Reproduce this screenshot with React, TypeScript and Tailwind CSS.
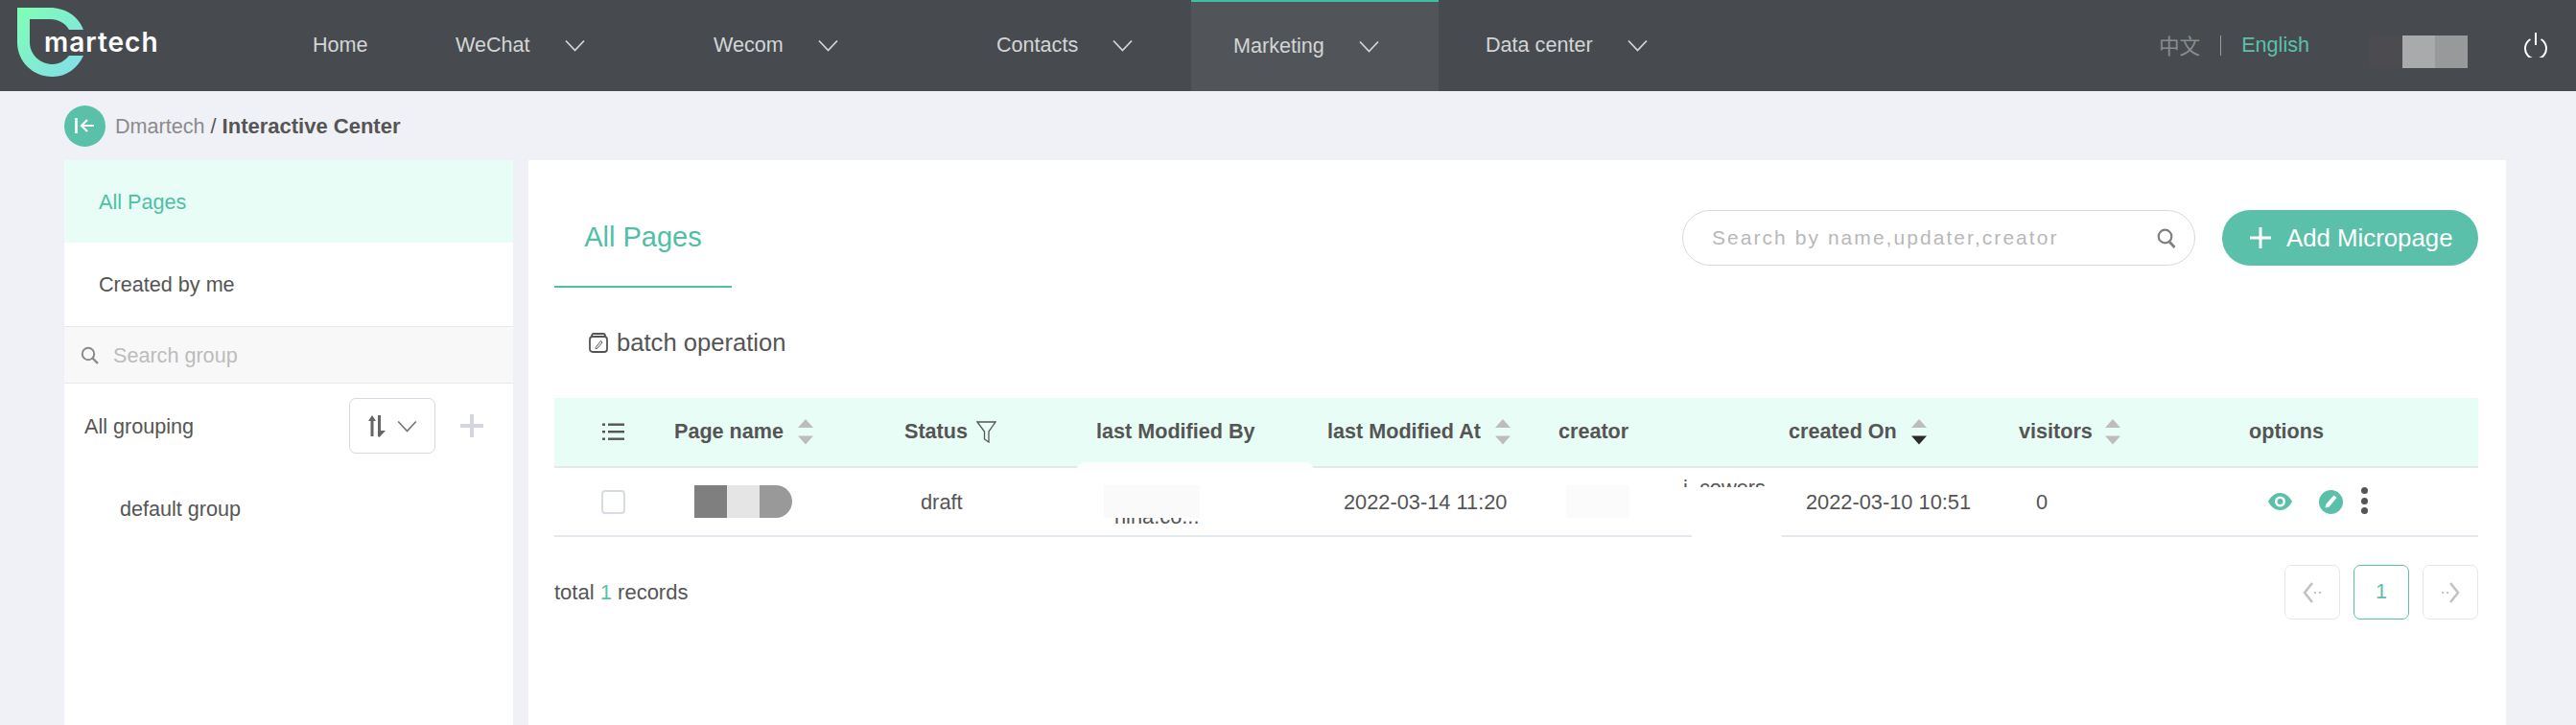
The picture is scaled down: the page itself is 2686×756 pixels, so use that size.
import React from "react";

const sans = "font-['Liberation_Sans',Arial,sans-serif]";

function Chevron({ className = "" }: { className?: string }) {
  return (
    <svg width="21" height="13" viewBox="0 0 21 13" fill="none" className={className}>
      <path d="M1 1.5 L10.5 11.5 L20 1.5" stroke="currentColor" strokeWidth="1.8" />
    </svg>
  );
}

function Sort({ active = false }: { active?: boolean }) {
  return (
    <svg width="16" height="27" viewBox="0 0 16 27" className="shrink-0">
      <path d="M8 0 L16 9 H0 Z" fill="#bdbdbd" />
      <path d="M0 17.5 H16 L8 26.5 Z" fill={active ? "#2b2b2b" : "#bdbdbd"} />
    </svg>
  );
}

function NavItem({ label, width, pad = 44, active = false, arrow = true }: { label: string; width: number; pad?: number; active?: boolean; arrow?: boolean }) {
  return (
    <div
      style={{ width, paddingLeft: pad }}
      className={`h-full flex items-center gap-[36px] text-[21.6px] text-[#d4d5d6] ${active ? "bg-[#51555a] border-t-2 border-[#3fbfa2]" : ""}`}
    >
      <span>{label}</span>
      {arrow && <Chevron />}
    </div>
  );
}

function Head({ label, sort, active, gap = 15 }: { label: string; sort?: boolean; active?: boolean; gap?: number }) {
  return (
    <div style={{ gap }} className="flex items-center font-bold text-[#555]">
      <span>{label}</span>
      {sort && <Sort active={active} />}
    </div>
  );
}

export default function App() {
  return (
    <div className={`${sans} relative w-[2686px] h-[756px] overflow-hidden bg-[#f0f1f6] text-[21.6px] text-[#555] flex flex-col`}>
      {/* header */}
      <header className="h-[95px] shrink-0 bg-[#474b50] flex items-center">
        <div className="relative w-[282px] h-full shrink-0">
          <svg width="70" height="74" viewBox="18 8 70 74" className="absolute left-[18px] top-[8px]">
            <defs>
              <linearGradient id="lg" x1="0" y1="0" x2="1" y2="1">
                <stop offset="0" stopColor="#80ffb4" />
                <stop offset="1" stopColor="#82dcec" />
              </linearGradient>
            </defs>
            <path
              d="M18 8 H52 C68 8 82 17 87 31 H72 C68 24 61 20 52 20 H31 V44 C31 57 42 67 55 67 C62 67 68 63 72 58 H87 C81 71 69 80 55 80 C34 80 18 64 18 44 Z"
              fill="url(#lg)"
            />
          </svg>
          <span className="absolute left-[46px] top-[23px] font-['Inter',sans-serif] font-semibold text-[28px] tracking-[1px] text-white">martech</span>
        </div>
        <NavItem label="Home" width={149} arrow={false} />
        <NavItem label="WeChat" width={269} />
        <NavItem label="Wecom" width={295} />
        <NavItem label="Contacts" width={247} />
        <NavItem label="Marketing" width={258} active />
        <NavItem label="Data center" width={300} pad={49} />
        <div className="ml-[451px] flex items-center text-[21.6px]">
          <span className="font-['Noto_Sans_CJK_SC',sans-serif] text-[#8a8c8e]">中文</span>
          <span className="w-px h-[21px] bg-[#9a9c9e] mx-[21px]" />
          <span className="text-[#5bc0aa]">English</span>
          <div className="ml-[63px] flex h-[34px] mt-[12px]">
            <span className="w-[34px] bg-[#4c4c50]" />
            <span className="w-[34px] bg-[#a9aaac]" />
            <span className="w-[34px] bg-[#98999b]" />
          </div>
          <svg width="26" height="27" viewBox="0 0 26 27" fill="none" className="ml-[58px] mb-[3px]">
            <path d="M7.5 8 A11 11 0 1 0 18.5 8" stroke="#fff" strokeWidth="2" />
            <path d="M13 1 V14" stroke="#fff" strokeWidth="2" />
          </svg>
        </div>
      </header>

      {/* breadcrumb */}
      <div className="h-[72px] shrink-0 pl-[67px] flex items-center gap-[10px]">
        <div className="w-[43px] h-[43px] rounded-full bg-[#5bc0aa] flex items-center justify-center">
          <svg width="21" height="18" viewBox="0 0 21 18" fill="none" stroke="#fff">
            <path d="M1.5 1 V17" strokeWidth="2.6" />
            <path d="M20 9 H7 M13 3 L7 9 L13 15" strokeWidth="2.2" />
          </svg>
        </div>
        <div className="pt-[2px]">
          <span className="text-[#8b8b8b]">Dmartech</span> <span className="text-[#555]">/</span>{" "}
          <span className="font-bold text-[22px] text-[#555]">Interactive Center</span>
        </div>
      </div>

      {/* body */}
      <div className="flex-1 flex pl-[67px] gap-[16px] min-h-0">
        <aside className="w-[468px] bg-white shrink-0">
          <div className="h-[86px] bg-[#e8fdf6] text-[#4fc0a5] pl-[36px] pt-[2px] flex items-center">All Pages</div>
          <div className="h-[87px] pl-[36px] pt-[2px] flex items-center text-[#555]">Created by me</div>
          <div className="h-[60px] bg-[#f8f8f8] border-y-[1.5px] border-[#e6e8ef] pl-[17px] flex items-center gap-[15px]">
            <svg width="19" height="19" viewBox="0 0 19 19" fill="none" stroke="#8a8a8a">
              <circle cx="8" cy="8" r="6.2" strokeWidth="2" />
              <path d="M12.5 12.5 L18 18" strokeWidth="2.4" />
            </svg>
            <span className="text-[#bcbcbc] pt-[2px]">Search group</span>
          </div>
          <div className="h-[88px] pl-[21px] flex items-center text-[#555]">
            <span className="w-[276px] pt-[2px]">All grouping</span>
            <div className="w-[90px] h-[58px] border border-[#d5d9e3] rounded-[7px] flex items-center justify-center gap-[11px]">
              <svg width="20" height="23" viewBox="0 0 20 23" fill="#666">
                <path d="M5 0 L9 6 H6.5 V22 H3.5 V6 H1 Z" />
                <path d="M11 0 H14 V16 H19 L12.5 23 L11 22 Z" />
              </svg>
              <Chevron className="text-[#777] scale-x-[.98]" />
            </div>
            <svg width="24" height="24" viewBox="0 0 24 24" className="ml-[26px]" fill="#d3d6e0">
              <path d="M10 0 H14 V10 H24 V14 H14 V24 H10 V14 H0 V10 H10 Z" />
            </svg>
          </div>
          <div className="pl-[58px] pt-[27px] text-[#555]">default group</div>
        </aside>

        <main className="w-[2062px] bg-white shrink-0 pl-[27px] pr-[29px] relative">
          <div className="h-[133px] flex justify-between">
            <div className="w-[185px] h-full border-b-2 border-[#4fc0a5] pt-[62px] text-center text-[29px] leading-[36px] text-[#4fc0a5]">All Pages</div>
            <div className="flex gap-[28px] pt-[52px]">
              <div className="w-[535px] h-[58px] rounded-full border-[1.5px] border-[#d7d9e3] pl-[30px] pr-[19px] flex items-center justify-between">
                <span className="text-[21px] tracking-[2.05px] text-[#b8b8b8]">Search by name,updater,creator</span>
                <svg width="20" height="21" viewBox="0 0 20 21" fill="none" stroke="#808080">
                  <circle cx="8.5" cy="8.5" r="6.8" strokeWidth="2.2" />
                  <path d="M13 14 L18.5 20" strokeWidth="2.8" />
                </svg>
              </div>
              <button className="w-[267px] h-[58px] rounded-full bg-[#5bc0aa] text-white text-[25.8px] flex items-center pl-[29px] gap-[16px]">
                <svg width="22" height="22" viewBox="0 0 22 22" fill="#fff">
                  <path d="M9.5 0 H12.5 V9.5 H22 V12.5 H12.5 V22 H9.5 V12.5 H0 V9.5 H9.5 Z" />
                </svg>
                <span>Add Micropage</span>
              </button>
            </div>
          </div>

          <div className="h-[115px] pl-[36px] flex items-center gap-[9px] text-[25.6px] text-[#555]">
            <svg width="20" height="21" viewBox="0 0 20 21" fill="none" stroke="#555" strokeWidth="1.8">
              <path d="M3 4 V3 a2 2 0 0 1 2-2 H15 a2 2 0 0 1 2 2 V4" />
              <rect x="1" y="4" width="18" height="16" rx="3" />
              <path d="M7 15.5 L12.5 8.5 L14 10 L8.5 16.5 H7 Z" strokeWidth="1" />
            </svg>
            <span>batch operation</span>
          </div>

          {/* table */}
          <div className="grid grid-cols-[125px_240px_200px_241px_241px_240px_240px_240px_239px] h-[73px] bg-[#e8fdf6] border-b-2 border-[#e2e8ec] items-center">
            <div className="pl-[50px]">
              <svg width="23" height="19" viewBox="0 0 23 19" fill="#555">
                <rect x="0" y="0.5" width="3" height="2.4" />
                <rect x="6" y="0.5" width="17" height="2.4" />
                <rect x="0" y="8" width="3" height="2.4" />
                <rect x="6" y="8" width="17" height="2.4" />
                <rect x="0" y="15.5" width="3" height="2.4" />
                <rect x="6" y="15.5" width="17" height="2.4" />
              </svg>
            </div>
            <Head label="Page name" sort />
            <div className="flex items-center gap-[9px] font-bold text-[#555]">
              <span>Status</span>
              <svg width="21" height="23" viewBox="0 0 21 23" fill="none" stroke="#555" strokeWidth="1.3">
                <path d="M1 1 H20 L13 11 V22 L8.5 19 V11 Z" />
              </svg>
            </div>
            <Head label="last Modified By" />
            <Head label="last Modified At" sort />
            <Head label="creator" />
            <Head label="created On" sort active />
            <Head label="visitors" sort gap={13} />
            <Head label="options" />
          </div>
          <div className="grid grid-cols-[125px_240px_200px_241px_241px_240px_240px_240px_239px] h-[72px] border-b-2 border-[#e2e8ec] items-center text-[21.8px]">
            <div className="pl-[49px]">
              <div className="w-[25px] h-[25px] rounded-[4px] border-2 border-[#d7dbe6] bg-white" />
            </div>
            <div className="pl-[21px] flex">
              <span className="w-[34px] h-[34px] bg-[#7f7f7f]" />
              <span className="w-[34px] h-[34px] bg-[#e5e5e5]" />
              <span className="w-[34px] h-[34px] bg-[#999] rounded-r-[17px]" />
            </div>
            <div className="pl-[17px] pt-[2px]">draft</div>
            <div className="relative h-full">
              <div className="absolute left-[19px] top-[49px] w-[100px] h-[10px] overflow-hidden">
                <span className="absolute left-0 top-[-9px] leading-[22px] whitespace-nowrap">nina.co...</span>
              </div>
            </div>
            <div className="pl-[17px] pt-[2px]">2022-03-14 11:20</div>
            <div className="relative h-full">
              <div className="absolute left-[130px] top-[10px] w-[90px] h-[10px] overflow-hidden">
                <span className="absolute left-0 top-0 leading-[22px] whitespace-nowrap">{"i\u00a0\u00a0cowers"}</span>
              </div>
            </div>
            <div className="pl-[18px] pt-[2px]">2022-03-10 10:51</div>
            <div className="pl-[18px] pt-[2px]">0</div>
            <div className="pl-[20px] flex items-center">
              <svg width="25" height="18" viewBox="0 0 25 18">
                <path fillRule="evenodd" fill="#5bc0aa" d="M0 9 C3 3 8 0 12.5 0 C17 0 22 3 25 9 C22 15 17 18 12.5 18 C8 18 3 15 0 9 Z M12.5 3.5 A5.5 5.5 0 1 0 12.5 14.5 A5.5 5.5 0 1 0 12.5 3.5 Z M12.5 6 A3 3 0 1 1 12.5 12 A3 3 0 1 1 12.5 6 Z" />
              </svg>
              <div className="ml-[28px] w-[25px] h-[25px] rounded-full bg-[#5bc0aa] flex items-center justify-center">
                <svg width="13" height="14" viewBox="0 0 13 14" fill="#fff">
                  <path d="M9.5 0.5 L12.5 3 L4.5 12.5 L0.5 13.5 L1.5 9.5 Z" />
                </svg>
              </div>
              <div className="ml-[19px] flex flex-col gap-[3.5px] mb-[2px]">
                <span className="w-[7px] h-[7px] rounded-full bg-[#555]" />
                <span className="w-[7px] h-[7px] rounded-full bg-[#555]" />
                <span className="w-[7px] h-[7px] rounded-full bg-[#555]" />
              </div>
            </div>
          </div>

          {/* redaction smears lying over the table */}
          <div className="absolute left-[571px] top-[315px] w-[248px] h-[9px] bg-[#fbfefd] rounded-t-[30px]" />
          <div className="absolute left-[600px] top-[339px] w-[100px] h-[34px] bg-[#fafafa]" />
          <div className="absolute left-[1082px] top-[339px] w-[66px] h-[34px] bg-[#fbfbfb]" />
          <div className="absolute left-[1213px] top-[389px] w-[94px] h-[4px] bg-white" />

          <div className="pt-[29px] flex justify-between items-center">
            <div className="text-[22px]">
              total <span className="text-[#5bc0aa]">1</span> records
            </div>
            <div className="flex gap-[14px]">
              <div className="w-[58px] h-[57px] rounded-[7px] border border-[#e6e6e6] flex items-center justify-center">
                <svg width="20" height="22" viewBox="0 0 20 22" fill="none">
                  <path d="M10 1 L2 11 L10 21" stroke="#c2c2c2" strokeWidth="2.6" />
                  <path d="M12 11 H14 M17 11 H19" stroke="#c2c2c2" strokeWidth="2" />
                </svg>
              </div>
              <div className="w-[58px] h-[57px] rounded-[7px] border border-[#5bc0aa] flex items-center justify-center text-[#5bc0aa]">1</div>
              <div className="w-[58px] h-[57px] rounded-[7px] border border-[#e6e6e6] flex items-center justify-center">
                <svg width="20" height="22" viewBox="0 0 20 22" fill="none">
                  <path d="M10 1 L18 11 L10 21" stroke="#c2c2c2" strokeWidth="2.6" />
                  <path d="M1 11 H3 M6 11 H8" stroke="#c2c2c2" strokeWidth="2" />
                </svg>
              </div>
            </div>
          </div>
        </main>
      </div>
    </div>
  );
}
